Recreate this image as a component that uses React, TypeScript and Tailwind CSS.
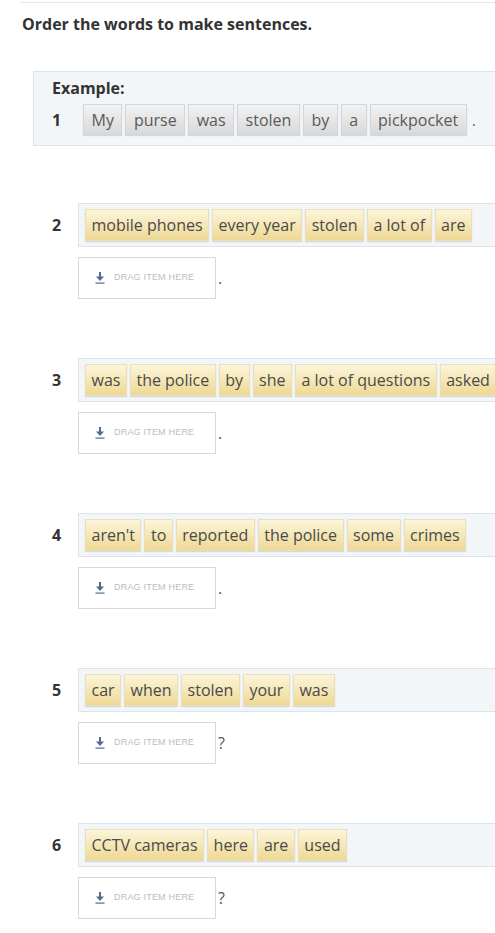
import React from "react";

type Row = { n: number; words: string[]; end: string };

const rows: Row[] = [
  { n: 2, words: ["mobile phones", "every year", "stolen", "a lot of", "are"], end: "." },
  { n: 3, words: ["was", "the police", "by", "she", "a lot of questions", "asked"], end: "." },
  { n: 4, words: ["aren't", "to", "reported", "the police", "some", "crimes"], end: "." },
  { n: 5, words: ["car", "when", "stolen", "your", "was"], end: "?" },
  { n: 6, words: ["CCTV cameras", "here", "are", "used"], end: "?" },
];

const example = ["My", "purse", "was", "stolen", "by", "a", "pickpocket"];

function Tile({ text, gray }: { text: string; gray?: boolean }) {
  return (
    <div
      className={
        gray
          ? "shrink-0 whitespace-nowrap h-[31px] px-[7.5px] flex items-center border border-[#d6d6d6] bg-linear-to-b from-[#f2f2f2] to-[#d9d9d9] text-[16px] text-[#5a5a5a] shadow-[0_1px_1px_rgba(0,0,0,0.12)]"
          : "shrink-0 whitespace-nowrap h-[32px] px-[5.5px] flex items-center border border-[#eadfb6] bg-linear-to-b from-[#fcf5d9] to-[#eed894] text-[16px] text-[#4a4a4a] shadow-[0_1px_1px_rgba(0,0,0,0.12)]"
      }
    >
      {text}
    </div>
  );
}

function DropIcon() {
  return (
    <svg width="10" height="12" viewBox="0 0 10 12" className="shrink-0">
      <rect x="4" y="0" width="2" height="5" fill="#4d6c91" />
      <path d="M1 4.5 L9 4.5 L5 9 Z" fill="#4d6c91" />
      <rect x="0.5" y="10.5" width="9" height="1.2" fill="#4d6c91" />
    </svg>
  );
}

export default function App() {
  return (
    <div className="w-[495px] h-[933px] overflow-hidden bg-white font-['Open_Sans',sans-serif] text-[#333]">
      <div className="ml-[20px] mt-[2px] border-t border-[#e6e6e6]" />
      <div className="pl-[22px] mt-[10px] text-[16px] leading-[22px] font-bold text-[#333]">
        Order the words to make sentences.
      </div>

      <div className="ml-[33px] mt-[36px] w-[480px] border border-[#dbe4ea] bg-[#f2f6f8] pl-[18px] pt-[5px] pb-[10px]">
        <div className="text-[16px] leading-[22px] font-bold text-[#333]">Example:</div>
        <div className="mt-[5px] flex items-center">
          <div className="w-[31px] shrink-0 text-[16px] font-bold text-[#333]">1</div>
          <div className="flex gap-[3px]">
            {example.map((w) => (
              <Tile key={w} text={w} gray />
            ))}
          </div>
          <span className="ml-[5px] text-[16px] text-[#666]">.</span>
        </div>
      </div>

      <div className="mt-[57px] flex flex-col gap-[59px]">
        {rows.map((r) => (
          <div key={r.n}>
            <div className="flex items-center pl-[52px]">
              <div className="w-[26px] shrink-0 text-[16px] font-bold text-[#333]">{r.n}</div>
              <div className="w-[480px] shrink-0 h-[44px] border border-[#dbe4ea] bg-[#f2f6f8] pl-[6px] flex items-center gap-[3px]">
                {r.words.map((w, i) => (
                  <Tile key={i} text={w} />
                ))}
              </div>
            </div>
            <div className="mt-[10px] ml-[78px] flex items-center">
              <div className="w-[138px] h-[42px] border border-[#d8d8d8] bg-white flex items-center pl-[16px] gap-[9px]">
                <DropIcon />
                <span className="text-[9px] tracking-[0.2px] text-[#bdbdbd] font-['Liberation_Sans',sans-serif] uppercase">
                  Drag item here
                </span>
              </div>
              <span className="ml-[2px] text-[16px] text-[#555]">{r.end}</span>
            </div>
          </div>
        ))}
      </div>
    </div>
  );
}
